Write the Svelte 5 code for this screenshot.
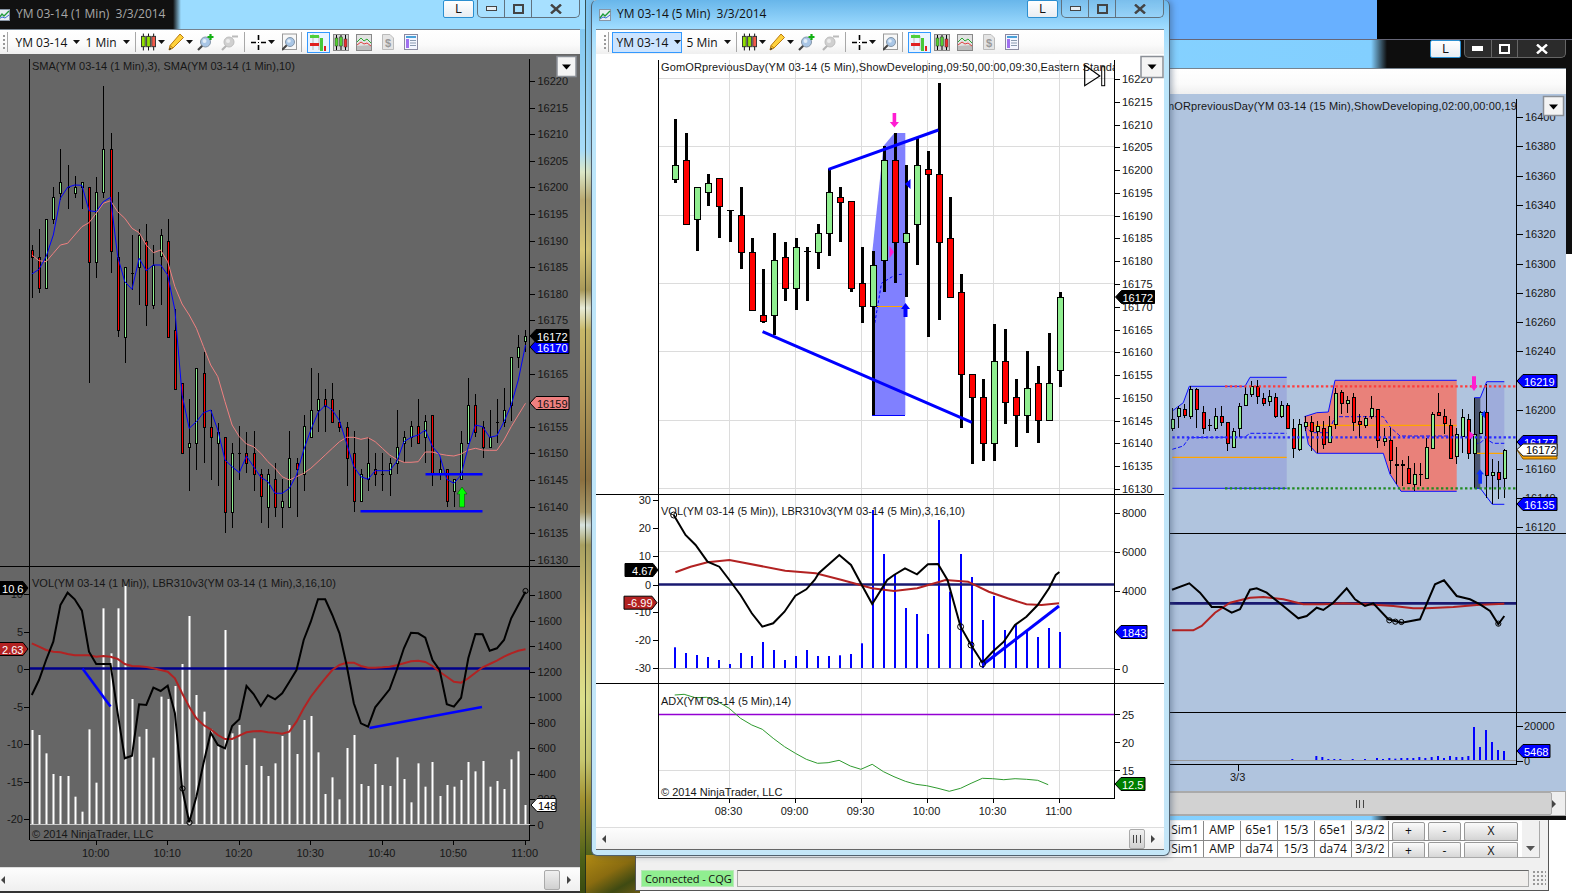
<script>
  // candle rows: [wickTop, wickBottom, bodyTop, bodyBottom, up]
  const aCandles = [[735,895,750,770,0],[688,880,770,865,0],[658,865,658,865,1],[560,672,592,658,1],[447,600,545,578,1],[495,628,562,563,1],[528,595,562,578,1],[545,628,545,562,1],[562,1150,562,785,0],[530,833,577,785,1],
    [258,595,447,577,1],[400,818,447,752,0],[577,1010,770,990,0],[800,1088,800,1010,1],[705,870,818,819,1],[688,915,705,800,1],[672,978,722,915,0],[735,928,795,915,1],[688,915,705,768,1],[658,928,722,1010,0],
    [928,1170,990,1168,0],[1150,1360,1150,1360,0],[1198,1472,1328,1342,1],[1105,1410,1105,1328,1],[1055,1390,1120,1280,0],[1230,1440,1280,1312,0],[1270,1458,1295,1328,1],[1312,1598,1312,1535,0],[1330,1583,1360,1535,1],[1278,1440,1360,1361,1],
    [1295,1420,1360,1390,0],[1293,1473,1360,1423,0],[1407,1568,1423,1487,0],[1407,1583,1423,1520,1],[1390,1550,1438,1520,0],[1437,1583,1502,1520,1],[1293,1520,1375,1520,1],[1375,1550,1390,1408,0],[1245,1473,1278,1423,1],[1105,1312,1230,1312,1],
    [1120,1295,1198,1230,1],[1167,1295,1198,1218,0],[1150,1265,1198,1265,0],[1230,1295,1265,1280,0],[1265,1458,1280,1375,0],[1292,1535,1360,1502,0],[1408,1502,1423,1502,1],[1312,1473,1390,1438,1],[1360,1457,1408,1423,0],[1360,1473,1423,1424,1],
    [1375,1488,1390,1423,1],[1230,1423,1342,1390,1],[1293,1390,1312,1328,1],[1262,1342,1278,1312,1],[1198,1328,1278,1328,0],[1245,1390,1262,1312,1],[1245,1457,1245,1423,0],[1375,1440,1408,1423,1],[1408,1520,1408,1502,0],[1438,1520,1438,1472,1],
    [1292,1440,1328,1438,1],[1135,1328,1215,1328,1],[1183,1312,1215,1295,0],[1262,1375,1280,1342,0],[1230,1342,1312,1342,1],[1198,1328,1265,1266,1],[1165,1280,1230,1265,1],[1072,1262,1072,1215,1],[1005,1105,1040,1072,1],[990,1055,1008,1024,1]];
  const aFast = [822,808,770,705,595,562,555,556,632,635,605,592,770,845,868,775,812,795,795,825,930,1185,1285,1265,1238,1230,1290,1380,1400,1418,1368,1400,1432,1445,1480,1480,1465,1425,1350,1290,1238,1216,1230,1262,1330,1400,1430,1438,1412,1412,1412,1385,1325,1312,1305,1290,1340,1365,1438,1450,1425,1340,1275,1280,1312,1307,1265,1215,1140,1035];
  const aSlow = [765,782,785,760,735,730,705,680,668,640,610,602,635,655,685,698,735,758,750,785,860,912,945,985,1040,1095,1130,1205,1275,1310,1332,1340,1360,1385,1405,1430,1440,1430,1420,1405,1385,1365,1345,1325,1312,1312,1318,1313,1325,1345,1365,1378,1387,1387,1385,1356,1356,1362,1366,1368,1362,1350,1345,1350,1351,1351,1320,1280,1245,1210];
  const aOsc = [315,270,210,155,45,8,28,62,185,222,222,222,370,505,497,343,345,293,303,287,370,595,697,620,520,428,465,475,408,388,288,312,348,316,328,310,275,240,150,95,28,28,75,130,225,340,400,410,352,325,298,240,175,128,130,143,210,240,343,350,323,205,132,133,182,175,150,85,45,5];
  const aSig = [160,170,180,185,187,192,196,196,196,200,198,200,207,222,228,229,231,235,240,245,265,310,350,385,405,418,435,447,447,437,427,424,423,427,428,431,425,395,355,320,292,265,240,225,218,218,228,233,233,232,230,226,220,214,212,216,228,245,260,275,278,265,248,232,222,212,200,190,182,178];
  const aVol = [420,435,490,552,558,558,620,665,418,578,55,190,55,-12,327,440,417,503,320,327,288,222,78,315,365,418,468,120,430,405,525,445,528,558,520,438,405,492,390,378,487,612,562,628,474,435,582,588,522,585,588,502,567,637,520,590,516,618,585,590,570,516,544,513,590,573,597,508,484,645];
  const ax = (i) => 31.8 + 7.155 * i;

  const bCandles = [[357,548,496,536,1],[400,673,481,673,0],[562,752,562,658,1],[522,617,550,577,1],[535,713,535,619,0],[630,725,631,632,0],[562,806,646,755,0],[714,931,755,931,0],[808,970,946,962,0],[700,1005,781,946,1],
    [727,902,770,865,0],[714,930,742,865,1],[742,902,754,755,0],[672,806,700,755,1],[508,767,577,700,1],[562,725,592,605,0],[604,875,604,865,0],[742,970,850,918,0],[752,1245,795,918,1],[438,875,481,780,1],
    [400,850,481,727,0],[495,890,700,727,1],[415,795,495,673,1],[453,1012,508,523,0],[250,960,523,727,0],[592,892,715,892,0],[822,1285,877,1123,0],[1123,1393,1123,1192,0],[1138,1382,1192,1330,0],[972,1382,1084,1330,1],
    [988,1272,1084,1207,0],[1138,1340,1192,1246,0],[1053,1298,1165,1246,1],[1097,1328,1150,1260,0],[1000,1260,1150,1260,1],[877,1162,892,1110,1]];
  const bVolTops = [647.3,653,655,657,660,664,653,656,642,650,660,656,650,656,656,655.3,654,643.3,510,554,575,608,614,634,520,591.7,554,577,620,596,630,625,631,637,628,632];
  const bx = (i) => 674.7 + 11.01 * i;
  const bOsc = [[673.7,515],[685.5,535],[695.6,545],[707.5,561.7],[719.3,566.7],[729.4,580],[740.5,595],[751.8,613.3],[762.3,626.7],[773.2,623.3],[784.5,611.7],[795.4,595.7],[806.3,589.3],[814.6,580],[819,573],[839.3,555],[851,565],[859.6,581],[872.2,604],[887.2,580],[894,575],[905,568.3],[917,574.3],[927.9,564.3],[938,564],[947.5,580],[960.6,626.7],[971,645],[982.4,662.7],[992.6,651.7],[1003.8,641.7],[1015,625],[1026.4,616.7],[1037.7,605],[1049,588.3],[1055.7,575],[1059.4,572]];
  const bSig = [[675.4,572.3],[690.6,566.7],[707.5,562.3],[729.4,560],[785.2,570.7],[815.7,573.3],[842,580],[872,588.3],[894,591],[917.3,588.3],[945.5,580],[968,581.7],[988.8,591.7],[1007.6,598.3],[1026.4,604.3],[1041.5,605],[1059,603.3]];
  const bAdx = [[225,345],[250,343],[280,353],[310,352],[340,365],[370,385],[400,415],[430,435],[458,448],[487,475],[517,500],[546,520],[575,538],[605,550],[633,548],[662,541],[692,558],[720,568],[750,553],[780,575],[808,590],[838,604],[866,613],[895,617],[925,625],[955,634],[985,625],[1013,610],[1043,595],[1070,596],[1100,599],[1130,596],[1160,598],[1190,601],[1218,614]].map(([x, y]) => [590 + x / 2.658, 580 + y / 3]);

  const cCandles = [[170,240,205,232,1],[165,230,172,196,1],[160,202,175,193,0],[105,205,115,196,1],[112,230,115,175,0],[165,250,184,232,0],[205,240,222,223,1],[170,240,194,230,1],[165,225,194,214,0],[212,300,214,277,0],
    [230,290,240,287,1],[155,258,165,230,1],[105,165,130,163,1],[90,138,106,128,1],[88,160,106,136,0],[125,165,140,157,0],[118,165,136,149,1],[125,200,139,196,0],[150,200,163,194,1],[155,235,163,230,0],
    [205,320,230,290,0],[205,300,220,295,1],[195,240,214,224,1],[195,300,214,240,0],[210,305,225,240,1],[210,295,230,280,0],[195,275,225,272,1],[110,235,127,220,1],[118,190,124,157,0],[135,185,148,157,1],
    [125,240,139,214,0],[190,260,211,220,0],[195,232,202,222,1],[135,205,172,196,1],[175,290,175,268,0],[230,285,262,270,1],[230,370,268,328,0],[288,400,338,343,0],[328,405,340,343,0],[315,400,352,395,0],
    [335,420,370,400,1],[335,405,370,372,0],[260,382,287,380,1],[182,290,190,290,1],[125,195,184,192,0],[175,250,195,215,0],[205,325,222,320,0],[230,338,250,316,1],[175,305,197,254,1],[190,325,203,307,0],
    [140,412,248,305,1],[180,250,182,247,1],[100,440,182,373,0],[325,460,362,373,1],[330,443,362,385,0],[295,440,298,382,1]];
  const cVol = [[397,324],[469,315],[487,318],[505,324],[523,324],[541,324],[578,324],[615,324],[651,321],[669,324],[688,321],[706,323],[724,321],[742,321],[760,321],[778,318],[796,321],[815,318],[834,315],[852,321],[870,315],[889,318],[907,318],[925,315],[942,228],[960,288],[978,237],[996,273],[1014,297],[1032,300]];
  const cOsc = [[36,716],[88,697],[120,725],[155,768],[185,768],[215,785],[240,775],[270,716],[290,712],[320,725],[370,765],[415,802],[440,795],[470,770],[490,777],[520,755],[560,712],[585,745],[615,765],[640,757],[685,805],[725,815],[780,805],[825,700],[852,688],[890,735],[930,745],[960,760],[990,780],[1015,820],[1033,795]];
  const cSig = [[36,838],[100,838],[125,825],[165,785],[210,755],[270,740],[310,738],[370,745],[430,760],[490,760],[550,757],[620,760],[700,765],[760,772],[800,772],[880,768],[950,762],[1033,758]];
  const cx = (d) => 1160 + d / 3;
  const cy = (d) => 350 + d / 3;
  const cPts = (list) => list.map(([x, y]) => `${cx(x).toFixed(1)},${cy(y).toFixed(1)}`).join(' ');

  const line = (list) => list.map((p) => p.map((v) => v.toFixed(1)).join(',')).join(' ');
  const aLine = (ys, top) => line(ys.map((y, i) => [ax(i), top + y / 3]));

  const aPrices = [16220,16215,16210,16205,16200,16195,16190,16185,16180,16175,16165,16155,16150,16145,16140,16135,16130];
  const bPrices = Array.from({ length: 19 }, (_, i) => 16220 - i * 5);
  const cPrices = [16400,16380,16360,16340,16320,16300,16280,16260,16240,16200,16160,16140,16120];
  const aTimes = ['10:00','10:10','10:20','10:30','10:40','10:50','11:00'];
  const bTimes = ['08:30','09:00','09:30','10:00','10:30','11:00'];
  const bGrid = [729.5, 795.5, 861.5, 927.5, 993.5, 1059.5];
  const rows = [['Sim1','AMP','65e1','15/3','65e1','3/3/2'],['Sim1','AMP','da74','15/3','da74','3/3/2']];
</script>

{#snippet candles(list, xOf, toY, bodyW, wickW)}
  <g shape-rendering="crispEdges">
    {#each list as c, i}
      {@const x = Math.round(xOf(i))}
      <rect x={x - wickW / 2 + (wickW === 1 ? 0.5 : 0)} y={toY(c[0])} width={wickW} height={toY(c[1]) - toY(c[0])} fill="#000" />
      {#if c[3] - c[2] < 3}
        <rect x={x - bodyW / 2} y={toY(c[2])} width={bodyW + 1} height="1" fill="#000" />
      {:else}
        <rect x={x - bodyW / 2 + 0.5} y={toY(c[2]) + 0.5} width={bodyW} height={toY(c[3]) - toY(c[2])} fill={c[4] ? '#90ee90' : '#ff0000'} stroke="#000" />
      {/if}
    {/each}
  </g>
{/snippet}

{#snippet flagR(x, y, w, label, bg, fg)}
  <polygon points={`${x},${y} ${x + 6},${y - 6.5} ${x + w},${y - 6.5} ${x + w},${y + 6.5} ${x + 6},${y + 6.5}`} fill={bg} stroke="#000" />
  <text class="flag" x={x + 7} y={y + 4.5} style:fill={fg}>{label}</text>
{/snippet}

{#snippet flagL(x, y, w, label, bg)}
  <polygon points={`${x},${y - 6.5} ${x + w - 5},${y - 6.5} ${x + w},${y} ${x + w - 5},${y + 6.5} ${x},${y + 6.5}`} fill={bg} stroke="#000" />
  <text class="flag" x={x + w - 4.5} y={y + 4.5} text-anchor="end">{label}</text>
{/snippet}

{#snippet dropdown(x, y, w, h)}
  <rect x={x} y={y} width={w} height={h} fill="#f4f4f4" stroke="#8a8f96" stroke-width="1.5" />
  <polygon points={`${x + w / 2 - 4.5},${y + 8} ${x + w / 2 + 4.5},${y + 8} ${x + w / 2},${y + 13}`} fill="#000" />
{/snippet}

{#snippet caret()}
  <svg class="caret" width="7" height="4" viewBox="0 0 7 4"><polygon points="0,0 7,0 3.5,4" fill="#111" /></svg>
{/snippet}

{#snippet toolbar(period, active)}
  <div class="toolbar">
    <span class="grip"></span>
    <span class="sep first"></span>
    <span class="combo symbol" class:active>YM 03-14 {@render caret()}</span>
    <span class="combo period">{period} {@render caret()}</span>
    <span class="sep"></span>
    <span class="tool wide">
      <svg width="16" height="18" viewBox="0 0 16 18">
        <path d="M2.5 0v18M8 0v18M13.5 0v18" stroke="#000" />
        <rect x="0.5" y="3" width="4" height="11" fill="#8fe000" stroke="#333" /><rect x="6" y="3" width="4" height="11" fill="#8fe000" stroke="#333" /><rect x="11.5" y="3" width="4" height="11" fill="#f25a4a" stroke="#333" />
      </svg>
      {@render caret()}
    </span>
    <span class="tool wide pencil">
      <svg width="16" height="18" viewBox="0 0 16 18">
        <polygon points="12,1 15.5,4.5 5,15 1,17 2,12.5" fill="#ffd23c" stroke="#b97a10" />
        <path d="M2 12.5l3 2.5" stroke="#b97a10" /><polygon points="1,17 2,14.5 3.5,16" fill="#333" />
      </svg>
      {@render caret()}
    </span>
    <span class="tool zoomin">
      <svg width="17" height="18" viewBox="0 0 17 18">
        <path d="M1 17l5-5" stroke="#444" stroke-width="2.2" />
        <circle cx="8.5" cy="9" r="5" fill="#a9c6e6" stroke="#8596a8" /><circle cx="7.5" cy="8" r="2" fill="#e3eef9" />
        <path d="M13.5 1v6M10.5 4h6" stroke="#12b012" stroke-width="2.2" />
      </svg>
    </span>
    <span class="tool zoomout">
      <svg width="17" height="18" viewBox="0 0 17 18">
        <path d="M1 17l5-5" stroke="#b4b4b4" stroke-width="2.2" />
        <circle cx="8" cy="9" r="5" fill="#d0d0d0" stroke="#bdbdbd" /><circle cx="7" cy="8" r="2" fill="#ececec" />
        <path d="M11 3.5h6" stroke="#bbb" stroke-width="2" />
      </svg>
    </span>
    <span class="sep"></span>
    <span class="tool cross">
      <svg width="15" height="15" viewBox="0 0 15 15"><path d="M7.5 0v5M7.5 10v5M0 7.5h5M10 7.5h5" stroke="#000" stroke-width="1.6" /><rect x="7" y="7" width="1" height="1" /></svg>
      {@render caret()}
    </span>
    <span class="tool lens">
      <svg width="15" height="18" viewBox="0 0 15 18">
        <rect x="0.5" y="1" width="14" height="15.5" fill="#f8f8f8" stroke="#999" />
        <path d="M0 17l5-5" stroke="#444" stroke-width="2" /><circle cx="8" cy="9" r="4.5" fill="#a9c6e6" stroke="#8596a8" /><circle cx="7" cy="8" r="1.8" fill="#e3eef9" />
      </svg>
    </span>
    <span class="sep last"></span>
    <span class="tool pick">
      <svg width="16" height="17" viewBox="0 0 16 17">
        <path d="M3 0v8M3 8v8M9 2v14" stroke="#bbb" /><rect x="0" y="1" width="9" height="3" fill="#4ed03a" /><rect x="0" y="9" width="9" height="3" fill="#e02020" />
        <rect x="10" y="4" width="3" height="13" fill="#48c838" /><rect x="14" y="12" width="2" height="5" fill="#e02020" />
      </svg>
    </span>
    <span class="tool box1">
      <svg width="16" height="17" viewBox="0 0 16 17">
        <rect x="0.5" y="0.5" width="15" height="16" fill="#d6d6d6" stroke="#888" />
        <path d="M3.5 1v15M8 1v15M12.5 1v15" stroke="#000" />
        <rect x="2" y="4" width="3" height="8" fill="#55d030" stroke="#333" stroke-width=".5" /><rect x="6.5" y="3" width="3" height="9" fill="#55d030" stroke="#333" stroke-width=".5" /><rect x="11" y="5" width="3" height="8" fill="#e83030" stroke="#333" stroke-width=".5" />
      </svg>
    </span>
    <span class="tool box2">
      <svg width="16" height="17" viewBox="0 0 16 17">
        <rect x="0.5" y="0.5" width="15" height="16" fill="#e2e2e2" stroke="#888" />
        <polygon points="1,12 1,16 15,16 15,11" fill="#bdbdbd" />
        <path d="M1 8l4-4 3 3 3-2 4 4" fill="none" stroke="#2aa830" /><path d="M1 11l4-3 3 2 3-1 4 3" fill="none" stroke="#e04040" />
      </svg>
    </span>
    <span class="tool doc">
      <svg width="12" height="16" viewBox="0 0 12 16">
        <polygon points="0.5,0.5 8,0.5 11.5,4 11.5,15.5 0.5,15.5" fill="#e4e4e4" stroke="#bbb" />
        <text x="6" y="12.5" text-anchor="middle" class="dollar">$</text>
      </svg>
    </span>
    <span class="tool sheet">
      <svg width="14" height="16" viewBox="0 0 14 16">
        <rect x="0.5" y="0.5" width="13" height="15" fill="#f4f6ff" stroke="#8a8aa0" />
        <rect x="2" y="2" width="10" height="2" fill="#4aa0d8" /><rect x="2" y="5" width="3" height="9" fill="#a070f0" />
        <path d="M6 6.5h6M6 9h6M6 11.5h6" stroke="#8a9ab0" />
      </svg>
    </span>
  </div>
{/snippet}

{#snippet caption(dark)}
  <span class="lock" class:dark>L</span>
  <span class="caps" class:dark>
    <span class="cap small"><svg width="11" height="5" viewBox="0 0 11 5"><rect x="0.5" y="0.5" width="10" height="4" fill={dark ? '#fff' : '#e8eef2'} stroke={dark ? '#fff' : '#444'} /></svg></span>
    <span class="cap small"><svg width="11" height="10" viewBox="0 0 11 10"><rect x="1" y="1" width="9" height="8" fill="none" stroke={dark ? '#fff' : '#444'} stroke-width="2" /></svg></span>
    <span class="cap"><svg width="12" height="10" viewBox="0 0 12 10"><path d="M1 0.5l10 9M11 0.5l-10 9" stroke={dark ? '#fff' : '#444'} stroke-width="2.4" /></svg></span>
  </span>
{/snippet}

{#snippet appIcon()}
  <svg class="appicon" width="12" height="12" viewBox="0 0 12 12">
    <rect x="0.5" y="0.5" width="11" height="11" fill="#e8eef4" stroke="#8895a5" />
    <path d="M1 9l3-4 2 2 5-5" fill="none" stroke="#1f9a3a" stroke-width="1.4" /><path d="M1 10l3-2 3 1 4-3" fill="none" stroke="#3a6ad0" />
  </svg>
{/snippet}

{#snippet scrollbar(thumbRight)}
  <div class="scroll">
    <span class="arrow left"></span>
    <span class="track"></span>
    <span class="thumb" style:margin-right={thumbRight}><i></i></span>
    <span class="arrow right"></span>
  </div>
{/snippet}

<div class="desktop">
  <div class="sky"></div>
  <div class="night"></div>
  <div class="strip"></div>
  <div class="leaves"></div>

  <div class="control">
    <div class="table">
      {#each rows as row}
        <div class="row">
          {#each row as cell}<span class="cell">{cell}</span>{/each}
          <span class="btn b1">+</span><span class="btn b1">-</span><span class="btn b2">X</span>
        </div>
      {/each}
      <div class="tablescroll"><svg width="9" height="5" viewBox="0 0 9 5"><polygon points="0,0 9,0 4.5,5" fill="#555" /></svg></div>
    </div>
    <div class="status">
      <span class="connected">Connected - CQG</span>
      <span class="statusbox"></span>
      <span class="resize"></span>
    </div>
  </div>

  <!-- 15 min, sits behind the 5 min window -->
  <section class="win win-c">
    <header class="title">{@render caption(true)}</header>
    <div class="toolbar empty"></div>
    <svg class="chart" width="566" height="697" viewBox="1000 93 566 697">
      <defs><clipPath id="clipC"><rect x="1000" y="93" width="516.5" height="30" /></clipPath></defs>
      <rect x="1000" y="93" width="566" height="697" fill="#b0c4de" />
      <polygon points={cPts([[37,180],[70,155],[88,106],[255,106],[270,79],[380,79],[380,412],[37,412]])} fill="#9eacdb" />
      <polygon points={cPts([[433,197],[470,185],[505,183],[525,88],[890,88],[890,421],[723,421],[690,370],[670,307],[470,307],[445,280],[433,215]])} fill="#e9817a" />
      <polygon points={cPts([[961,140],[980,92],[1033,92],[1033,412],[961,412]])} fill="#9eacdb" />
      <rect x={cx(943)} y={cy(140)} width="6" height="90.7" fill="#4a5570" />
      <polyline points={cPts([[37,180],[70,155],[88,106],[255,106],[270,79],[380,79]])} class="thin" />
      <polyline points={cPts([[37,412],[380,412]])} class="thin" />
      <polyline points={cPts([[37,295],[70,285],[88,260],[255,258],[270,247],[380,247]])} class="thin dash" />
      <polyline points={cPts([[433,197],[470,185],[505,183],[525,88],[890,88]])} class="thin" />
      <polyline points={cPts([[433,215],[445,280],[470,307],[670,307],[690,370],[723,421],[890,421]])} class="thin" />
      <polyline points={cPts([[433,225],[455,245],[505,245],[525,197],[670,197],[690,228],[720,255],[890,255]])} class="thin dash" />
      <polyline points={cPts([[943,140],[961,140],[980,92],[1033,92]])} class="thin" />
      <polyline points={cPts([[943,412],[961,412],[997,460],[1033,460]])} class="thin" />
      <polyline points={cPts([[943,277],[960,277],[975,262],[1000,277],[1033,277]])} class="thin dash" />
      <path d={`M${cx(37)} ${cy(319)}H${cx(380)}M${cx(433)} ${cy(223)}H${cx(890)}M${cx(943)} ${cy(307)}H${cx(1033)}`} stroke="#ffa500" stroke-width="1.3" fill="none" />
      {@render candles(cCandles, (i) => cx(37 + 18.1 * i), cy, 3, 1)}
      <path d={`M${cx(195)} ${cy(106)}H${cx(1068)}`} class="dots" stroke="#ff3c3c" />
      <path d={`M${cx(195)} ${cy(412)}H${cx(1068)}`} class="dots" stroke="#228b22" />
      <path d={`M${cx(37)} ${cy(259)}H${cx(1068)}`} class="dots" stroke="#2a2aff" />
      <polygon points={`${cx(936)},${cy(76)} ${cx(948)},${cy(76)} ${cx(948)},${cy(104)} ${cx(953)},${cy(104)} ${cx(942)},${cy(120)} ${cx(931)},${cy(104)} ${cx(936)},${cy(104)}`} fill="#ff1ed2" />
      <polygon points={`${cx(955)},${cy(398)} ${cx(966)},${cy(398)} ${cx(966)},${cy(370)} ${cx(972)},${cy(370)} ${cx(960)},${cy(355)} ${cx(949)},${cy(370)} ${cx(955)},${cy(370)}`} fill="#0a30ff" />
      <polygon points={`${cx(928)},${cy(240)} ${cx(943)},${cy(253)} ${cx(928)},${cy(266)}`} fill="#ff1ed2" />
      <polygon points={`${cx(975)},${cy(178)} ${cx(963)},${cy(190)} ${cx(975)},${cy(202)}`} fill="#0a30ff" />
      <path d="M1000 532.5H1566M1000 711.5H1566M1000 763.5H1516.5M1238.5 763v7" stroke="#000" fill="none" shape-rendering="crispEdges" />
      <path d={`M1000 ${cy(757)}H1516.5`} stroke="#191970" stroke-width="2.6" />
      <polyline points={cPts(cSig)} class="sig" />
      <polyline points={cPts(cOsc)} class="osc" />
      {#each [[688,808],[706,812],[724,813],[1015,818]] as [x, y]}
        <circle cx={cx(x)} cy={cy(y)} r="2.6" fill="none" stroke="#000" />
      {/each}
      <path d="M1000 759.5H1516" stroke="#999" shape-rendering="crispEdges" />
      {#each cVol as [x, y]}
        <rect x={cx(x) - 1} y={650 + y / 3} width="2" height={759 - 650 - y / 3} fill="#0000ff" />
      {/each}
      <path d="M1516.5 98V763" stroke="#000" shape-rendering="crispEdges" />
      {#each cPrices as p}
        {@const y = 116 + (16400 - p) * 1.4656}
        <path d={`M1517 ${Math.round(y) + 0.5}h6`} stroke="#000" shape-rendering="crispEdges" />
        <text x="1525" y={y + 4}>{p}</text>
      {/each}
      <path d="M1517 725.5h6M1517 760.5h6" stroke="#000" shape-rendering="crispEdges" />
      <text x="1524" y="729">20000</text><text x="1524" y="764">0</text>
      <text x="1230" y="780">3/3</text>
      <g clip-path="url(#clipC)"><text class="longlabel" x="1150" y="109">GomORpreviousDay(YM 03-14 (15 Min),ShowDeveloping,02:00,00:00,19:00,Eastern Standard</text></g>
      {@render flagR(1517, 380, 40, '16219', '#0000ff', '#fff')}
      {@render flagR(1517, 441, 40, '16177', '#0000ff', '#fff')}
      <polygon points="1517,449 1523,443 1557,443 1557,458 1523,458" fill="#ffa500" stroke="#8a5a00" />
      <polygon points="1517,448.5 1523,443 1557,443 1557,455 1523,455" fill="#fff" stroke="#222" />
      <text class="flag" x="1526" y="453" style:fill="#000">16172</text>
      {@render flagR(1517, 503, 40, '16135', '#0000ff', '#fff')}
      {@render flagR(1517, 750, 33, '5468', '#0000ff', '#fff')}
      {@render dropdown(1543.5, 95.5, 20, 19)}
    </svg>
    {@render scrollbar('0')}
  </section>

  <!-- 1 min -->
  <section class="win win-a">
    <header class="title">
      {@render appIcon()}
      <span class="name">YM 03-14 (1 Min)&nbsp; 3/3/2014</span>
      {@render caption(false)}
    </header>
    {@render toolbar('1 Min', false)}
    <svg class="chart" width="585" height="813" viewBox="-5 54 585 813">
      <rect x="-5" y="54" width="585" height="813" fill="#666" />
      <path d="M29.5 59V840M529.5 59V840M-5 566.5H580M29.5 840.5H530" stroke="#000" fill="none" shape-rendering="crispEdges" />
      {#each aPrices as p}
        {@const y = 81 + (16220 - p) * 5.32}
        <path d={`M530 ${Math.round(y) + 0.5}h5`} stroke="#000" shape-rendering="crispEdges" />
        <text x="537.5" y={y + 4}>{p}</text>
      {/each}
      <text x="32" y="70">SMA(YM 03-14 (1 Min),3), SMA(YM 03-14 (1 Min),10)</text>
      {@render candles(aCandles, ax, (d) => d / 3, 2, 1)}
      <polyline points={aLine(aSlow, 0)} class="slow" />
      <polyline points={aLine(aFast, 0)} class="fast" />
      <rect x="425.5" y="473" width="57" height="2.5" fill="#0000ff" />
      <rect x="360.5" y="510" width="122" height="2.5" fill="#0000ff" />
      <polygon points="459.5,507 464.5,507 464.5,494 467,494 462,487 457,494 459.5,494" fill="#00ff00" stroke="#0a500a" stroke-width=".6" />
      {@render flagR(530, 403, 39, '16159', '#f08080', '#111')}
      {@render flagR(530, 347, 39, '16170', '#0000ff', '#fff')}
      {@render flagR(530, 336, 39, '16172', '#000', '#fff')}

      <text x="32" y="587">VOL(YM 03-14 (1 Min)), LBR310v3(YM 03-14 (1 Min),3,16,10)</text>
      {#each [1800,1600,1400,1200,1000,800,600,400,200,0] as v}
        {@const y = 825 - v * 0.1278}
        <path d={`M530 ${Math.round(y) + 0.5}h5`} stroke="#000" shape-rendering="crispEdges" />
        <text x="537.5" y={y + 4}>{v}</text>
      {/each}
      {#each [10,5,0,-5,-10,-15,-20] as v}
        {@const y = 669 - v * 7.5}
        <path d={`M24 ${Math.round(y) + 0.5}h5`} stroke="#000" shape-rendering="crispEdges" />
        <text x="23" y={y + 4} text-anchor="end">{v}</text>
      {/each}
      {#each aVol as top, i}
        <rect x={Math.round(ax(i)) - 0.5} y={590 + top / 3} width="2" height={824 - 590 - top / 3} fill="#fff" />
      {/each}
      <path d="M30 824.5H530" stroke="#c8c8c8" shape-rendering="crispEdges" />
      <path d="M30 668.5H530" stroke="#00008b" stroke-width="2.6" />
      <polyline points={aLine(aSig, 590)} class="sig" />
      <polyline points={aLine(aOsc, 590)} class="osc" />
      <path d="M82.5 668.5L110.5 706.5M369.5 728L482 707" stroke="#0000ff" stroke-width="2.6" fill="none" />
      {#each [[182.5,788.5],[189.5,822.5],[525.5,591]] as [x, y]}
        <circle cx={x} cy={y} r="2.6" fill="none" stroke="#000" />
      {/each}
      <text x="32" y="838">© 2014 NinjaTrader, LLC</text>
      {#each aTimes as t, i}
        {@const x = 95.7 + i * 71.5}
        <path d={`M${Math.round(x) + 0.5} 840v5`} stroke="#000" shape-rendering="crispEdges" />
        <text x={x} y="857" text-anchor="middle">{t}</text>
      {/each}
      {@render flagL(-5, 588, 33, '10.6', '#000')}
      {@render flagL(-5, 649, 33, '2.63', '#b22222')}
      {@render flagR(531, 805, 25, '148', '#fff', '#000')}
      {@render dropdown(557, 56.5, 19, 20)}
    </svg>
    {@render scrollbar('7px')}
  </section>

  <!-- 5 min -->
  <section class="win win-b">
    <header class="title">
      {@render appIcon()}
      <span class="name">YM 03-14 (5 Min)&nbsp; 3/3/2014</span>
      {@render caption(false)}
    </header>
    {@render toolbar('5 Min', true)}
    <svg class="chart" width="568" height="773" viewBox="596 54 568 773">
      <defs><clipPath id="clipB"><rect x="659" y="56" width="455" height="20" /></clipPath></defs>
      <rect x="596" y="54" width="568" height="773" fill="#fff" />
      {#each bGrid as x}<path d={`M${x} 60V798`} stroke="#dcdcdc" shape-rendering="crispEdges" />{/each}
      {#each [78.5,146.5,215.5,283.5,351.5,420.5,488.5,770.5,551.5] as y}<path d={`M659 ${y}H1114`} stroke="#dcdcdc" shape-rendering="crispEdges" />{/each}
      <polygon points="872.4,415 872.4,251 883.5,146 894.4,133 905.3,133 905.3,415" fill="#8080ff" />
      <path d="M872.4 415.5H905.3" stroke="#0000ff" shape-rendering="crispEdges" />
      <polyline points="874.8,323 881.5,283.3 895,275 904,274" fill="none" stroke="#0000ff" stroke-dasharray="3 2" />
      <path d="M876.5 306.5H902" stroke="#ffa500" stroke-width="1.3" shape-rendering="crispEdges" />
      {@render candles(bCandles, bx, (d) => d / 3, 6, 3)}
      <polygon points="892.6,113 896.2,113 896.2,122 899,122 894.4,127.5 889.8,122 892.6,122" fill="#ff1ed2" />
      <polygon points="903.5,317 907.5,317 907.5,309 910,309 905.5,303 901,309 903.5,309" fill="#0000ff" />
      <polygon points="910.5,179 905,184 910.5,189" fill="#0000ff" />
      <polygon points="889.5,246 894,252 889.5,258" fill="#ff1ed2" />
      <path d="M828.5 169.3L938.4 130M762.6 331.7L971.8 422.3" stroke="#0000ff" stroke-width="3" fill="none" />
      <polygon points="1084.7,65 1099.8,76 1084.7,85.7" fill="none" stroke="#000" stroke-width="1.2" />
      <rect x="1101.7" y="66.7" width="3" height="19" fill="none" stroke="#000" />
      <g clip-path="url(#clipB)"><text class="longlabel" x="661" y="71">GomORpreviousDay(YM 03-14 (5 Min),ShowDeveloping,09:50,00:00,09:30,Eastern Standard</text></g>
      <path d="M658.5 60V798M1114.5 60V798M596 494.5H1164M596 683.5H1164M658 798.5H1115" stroke="#000" fill="none" shape-rendering="crispEdges" />
      {#each bPrices as p}
        {@const y = 79 + (16220 - p) * 4.556}
        <path d={`M1115 ${Math.round(y) + 0.5}h5`} stroke="#000" shape-rendering="crispEdges" />
        <text x="1122" y={y + 4}>{p}</text>
      {/each}

      <path d="M659 668.5H1114" stroke="#b4b4b4" shape-rendering="crispEdges" />
      {#each bVolTops as top, i}
        <rect x={Math.round(bx(i)) - 1} y={top} width="2" height={668 - top} fill="#0000ff" />
      {/each}
      <path d="M659 584.5H1114" stroke="#191970" stroke-width="2.6" />
      <polyline points={line(bSig)} class="sig" />
      <polyline points={line(bOsc)} class="osc" />
      <path d="M982.4 665L1059 606" stroke="#0000ff" stroke-width="3" />
      {#each [[673.7,515],[960.6,626.7],[971,645],[982.4,664]] as [x, y]}
        <circle cx={x} cy={y} r="3" fill="none" stroke="#000" />
      {/each}
      <text x="661" y="515">VOL(YM 03-14 (5 Min)), LBR310v3(YM 03-14 (5 Min),3,16,10)</text>
      {#each [[8000,512.7],[6000,551.7],[4000,590.7],[0,669]] as [v, y]}
        <path d={`M1115 ${Math.round(y) + 0.5}h5`} stroke="#000" shape-rendering="crispEdges" />
        <text x="1122" y={y + 4}>{v}</text>
      {/each}
      {#each [[30,500],[20,527.5],[10,555.5],[0,584.5],[-10,612],[-20,640],[-30,667.7]] as [v, y]}
        <path d={`M653 ${Math.round(y) + 0.5}h5`} stroke="#000" shape-rendering="crispEdges" />
        <text x="651" y={y + 4} text-anchor="end">{v}</text>
      {/each}
      {@render flagL(625, 570, 33, '4.67', '#000')}
      {@render flagL(624, 602.7, 33, '-6.99', '#b22222')}
      {@render flagR(1115, 632, 32, '1843', '#0000ff', '#fff')}

      <path d="M659 714.5H1114" stroke="#9400d3" stroke-width="1.3" />
      <polyline points={line(bAdx)} fill="none" stroke="#2e9a2e" stroke-width="1" />
      <text x="661" y="705">ADX(YM 03-14 (5 Min),14)</text>
      <text x="661" y="796">© 2014 NinjaTrader, LLC</text>
      {#each [[25,715],[20,743],[15,771]] as [v, y]}
        <path d={`M1115 ${y - 0.5}h5`} stroke="#000" shape-rendering="crispEdges" />
        <text x="1122" y={y + 4}>{v}</text>
      {/each}
      {@render flagR(1115, 784, 30, '12.5', '#008000', '#fff')}
      {#each bTimes as t, i}
        <path d={`M${bGrid[i]} 798v5`} stroke="#000" shape-rendering="crispEdges" />
        <text x={bGrid[i] - 1} y="815" text-anchor="middle">{t}</text>
      {/each}
      {@render flagR(1115.5, 297, 39, '16172', '#000', '#fff')}
      {@render dropdown(1141, 56.5, 22, 21)}
    </svg>
    {@render scrollbar('6px')}
  </section>
</div>

<style>
  :global(body) {
    margin: 0;
    overflow: hidden;
    background: #fff;
  }
  .desktop {
    --glass: linear-gradient(180deg, #7cc4f0 0, #a8dcf8 150px, #dce8c8 172px, #b8a870 200px, #d8c878 250px, #a89858 290px, #e8ecd8 308px, #c8b868 330px, #b09858 400px, #8c7040 480px, #a89868 512px, #d8e4e0 525px, #a8a060 545px, #d8c878 620px, #dce08c 700px, #c8c870 760px, #a09030 800px, #4c6018 860px, #3a4a10 893px);
    position: relative;
    width: 1572px;
    height: 893px;
    overflow: hidden;
    background: #fff;
    font-family: "Open Sans", "Liberation Sans", sans-serif;
  }
  .sky { position: absolute; left: 1165px; top: 0; width: 212px; height: 45px; background: #68b0ff; }
  .night { position: absolute; left: 1377px; top: 0; width: 195px; height: 253px; background: #000; }
  .strip { position: absolute; left: 578px; top: 0; width: 16px; height: 893px; background: var(--glass); }
  .leaves {
    position: absolute; left: 586px; top: 855px; width: 54px; height: 38px;
    background: linear-gradient(150deg, #b08a14 0, #8a6c10 45%, #3f4a12 75%, #6a5a14 100%);
  }

  /* order entry window behind the charts */
  .control {
    position: absolute; left: 635px; top: 800px; width: 914px; height: 91px;
    display: flex; flex-direction: column;
    background: #f0f0f0; border: 1px solid #555; box-sizing: border-box;
    font-size: 12px; color: #111;
  }
  .table {
    position: relative; height: 36px; margin: 20px 8px 0 0; padding-right: 21px;
    display: flex; flex-direction: column; align-items: flex-end; overflow: hidden;
    background: #fff; border-right: 1px solid #aaa; border-bottom: 1px solid #aaa;
  }
  .row { display: flex; height: 20px; flex: none; border-bottom: 1px solid #888; box-sizing: border-box; }
  .row + .row { height: 16px; border-bottom: 0; }
  .row + .row .cell { line-height: 16px; }
  .row + .row .btn { border-bottom: 0; height: 15px; line-height: 15px; border-radius: 2px 2px 0 0; }
  .cell { width: 36px; border-right: 1px solid #888; text-align: center; line-height: 18px; }
  .btn {
    margin: 1px 0 0 3px; height: 17px; line-height: 16px; text-align: center;
    background: linear-gradient(#fafafa, #e4e4e4 60%, #d4d4d4); border: 1px solid #999; border-radius: 2px;
  }
  .b1 { width: 31px; }
  .b2 { width: 52px; }
  .tablescroll {
    position: absolute; right: 0; top: 0; bottom: 0; width: 17px;
    display: flex; align-items: flex-end; justify-content: center; padding-bottom: 6px; box-sizing: border-box;
    background: #f0f0f0;
  }
  .status { display: flex; gap: 3px; margin: 12px 2px 0 5px; height: 17px; }
  .connected {
    width: 93px; background: #90ee90; border: 1px solid #b8e8b8; box-sizing: border-box;
    font: 11px/15px "Open Sans", sans-serif; letter-spacing: -.1px; padding-left: 3px; white-space: nowrap;
  }
  .statusbox { flex: 1; border: 1px solid #aaa; border-top-color: #666; background: #f0eeec; }
  .resize {
    width: 14px;
    background: radial-gradient(circle, #999 1px, transparent 1.5px) 0 0 / 4px 4px;
  }

  /* chart windows */
  .win { position: absolute; display: flex; flex-direction: column; box-sizing: border-box; }
  .win-a {
    left: -11px; top: 0; width: 597px; height: 893px; padding: 0 5px 0 6px;
    background: var(--glass);
    border-right: 1px solid rgba(30, 40, 30, .75);
  }
  .win-a .title {
    margin: 0 -5px 0 -6px; padding: 0 5px 0 6px;
    background: linear-gradient(90deg, #111 0, #111 184px, #9bdcff 192px);
  }
  .win-b {
    left: 591px; top: 0; width: 579px; height: 856px; padding: 0 5px 0 4px;
    background: linear-gradient(#68b6ea 0, #9fdcff 28px, #bce6fb 60px, #c4e6f8 100%);
    border: 1px solid #50606e; border-top: 0; border-radius: 6px;
    box-shadow: 2px 0 6px rgba(50, 70, 100, .45);
  }
  .win-c {
    left: 994px; top: 39px; width: 578px; height: 781px; padding: 0 6px;
    background: linear-gradient(90deg, #86d2ff 0, #82cfff 377px, #0e0e0e 393px);
    border-top: 1px solid #667;
  }
  .win-c::after {
    content: ""; position: absolute; left: 0; right: 0; top: 214px; bottom: 0;
    border-right: 6px solid #fff; pointer-events: none;
  }
  .title { display: flex; align-items: flex-start; height: 29px; flex: none; position: relative; color: #0d0d0d; }
  .win-c .title { height: 28px; justify-content: flex-end; }
  .appicon { margin: 9px 0 0 3px; flex: none; }
  .name { margin: 5px auto 0 6px; font-size: 12px; line-height: 17px; white-space: pre; }
  .win-a .name { color: #a8a8a8; }
  .win-b .name { color: #111; }
  .lock {
    width: 31px; height: 18px; box-sizing: border-box; margin-top: 0;
    background: linear-gradient(#fff, #e8edf2); border: 1px solid #2c8fd0; border-radius: 2px;
    font: 12px/16px "Liberation Sans", sans-serif; text-align: center; color: #111;
  }
  .caps {
    display: flex; width: 103px; height: 18px; margin-left: 3px; box-sizing: border-box;
    border: 1px solid #60727f; border-top: 0; border-radius: 0 0 5px 5px;
    background: rgba(255, 255, 255, .12);
  }
  .caps.dark { border-color: #666; width: 102px; }
  .cap { width: 47px; display: flex; align-items: center; justify-content: center; }
  .cap.small { width: 27px; border-right: 1px solid #60727f; box-sizing: border-box; }
  .caps.dark .cap.small { border-color: #666; }

  .toolbar {
    display: flex; align-items: center; height: 25px; flex: none;
    background: linear-gradient(#fff, #fbfbfb 60%, #efefef);
    border-top: 1px solid #76838f; box-sizing: border-box;
    font-size: 12px; color: #111;
  }
  .toolbar.empty { height: 26px; }
  .grip { width: 2px; height: 15px; margin-left: 7.5px; background: repeating-linear-gradient(#999 0 2px, transparent 2px 4px); flex: none; }
  .sep { width: 1px; height: 20px; margin: 0 5px 0 6px; background: #a8a8a8; flex: none; }
  .sep.first { margin: 0 3px 0 2px; }
  .sep.last { margin: 0 5px 0 4px; }
  .combo { display: flex; align-items: center; gap: 6px; box-sizing: border-box; height: 21px; white-space: nowrap; font-size: 12px; flex: none; }
  .caret { flex: none; }
  .symbol { width: 70px; padding-left: 4px; border: 1px solid transparent; }
  .symbol.active { background: #cce4ff; border-color: #3399ff; }
  .period { width: 48px; padding-left: 5px; }
  .tool { display: flex; align-items: center; gap: 2px; flex: none; }
  .wide { width: 24px; }
  .wide.pencil { width: 26px; margin-left: 3px; }
  .zoomin { margin-left: 3px; }
  .zoomout { margin-left: 7px; }
  .cross { margin-left: 1px; }
  .lens { margin-left: 7px; }
  .pick {
    width: 23px; height: 21px; justify-content: center; box-sizing: border-box;
    border: 1px solid #3399ff; background: #eaf4ff;
  }
  .box1 { margin-left: 3px; }
  .box2 { margin-left: 7px; }
  .doc { margin-left: 10px; }
  .sheet { margin-left: 10px; }
  .dollar { font: bold 11px "Liberation Sans", sans-serif; fill: #9a9a9a; }

  .chart { display: block; flex: none; }
  .chart text { font: 11px "Liberation Sans", sans-serif; fill: #161616; }
  .chart text.longlabel { letter-spacing: .135px; }
  .chart text.flag { font-size: 11px; fill: #fff; }
  .thin { fill: none; stroke: #0a10ff; stroke-width: 1; }
  .dash { stroke-dasharray: 4 2; }
  .dots { stroke-width: 2.4; stroke-dasharray: 2.4 2.4; fill: none; }
  .fast { fill: none; stroke: #0000ff; stroke-width: 1; }
  .slow { fill: none; stroke: #f08080; stroke-width: 1; }
  .sig { fill: none; stroke: #b22222; stroke-width: 2; }
  .osc { fill: none; stroke: #000; stroke-width: 2; }

  .scroll {
    display: flex; align-items: center; height: 23px; flex: none; box-sizing: border-box;
    background: linear-gradient(#fdfdfd, #efefef); border-top: 1px solid #ddd; border-bottom: 1px solid #666;
  }
  .win-a .scroll { height: 26px; border-bottom: 2px solid #333; }
  .win-c .scroll { background: #eee; border: 1px solid #aaa; height: 25px; }
  .track { flex: 1; }
  .win-c .track { flex: none; width: 156px; }
  .arrow { width: 0; height: 0; border: 4px solid transparent; flex: none; }
  .arrow.left { border-right: 4px solid #444; margin-left: 2px; }
  .arrow.right { border-left: 4px solid #444; margin: 0 5px 0 0; }
  .thumb {
    width: 16px; height: 20px; flex: none; display: flex; align-items: center; justify-content: center;
    background: linear-gradient(#f0f0f0, #d0d0d0); border: 1px solid #aaa; border-radius: 2px; box-sizing: border-box;
  }
  .win-c .thumb { flex: 1; height: 23px; margin-right: 4px; background: #d2d2d2; }
  .win-b .thumb i, .win-c .thumb i { width: 6px; height: 8px; border-left: 1px solid #444; border-right: 1px solid #444; background: linear-gradient(90deg, transparent 2px, #444 2px 3px, transparent 3px); }
</style>
